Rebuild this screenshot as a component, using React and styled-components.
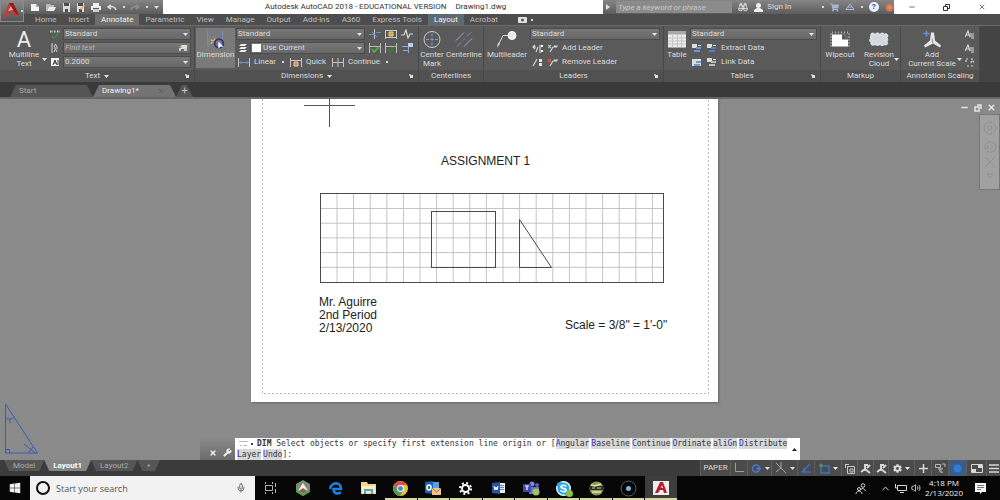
import React, { useState } from 'react';
import styled, { createGlobalStyle, css } from 'styled-components';
import { FaSkype, FaWindows, FaCog, FaShoppingCart } from 'react-icons/fa';
import { Mic, Minus, X, Wrench, Binoculars, ChevronUp, Volume2 } from 'lucide-react';

const GlobalStyle = createGlobalStyle`
	* { box-sizing: border-box; }
	body { margin: 0; background: #3b3b3b; }
	button, input, select { font: inherit; color: inherit; margin: 0; }
	svg { display: block; flex: none; }
`;

/* ---------- icons ---------- */

const Icon = ({ w = 12, h = 12, children, ...rest }) => (
	<svg
		width={w}
		height={h}
		viewBox={`0 0 ${w} ${h}`}
		fill="none"
		stroke="#d6d6d6"
		aria-hidden="true"
		{...rest}
	>
		{children}
	</svg>
);

const Arrow = () => (
	<Icon w={5} h={3} stroke="none">
		<path d="M0 0h5L2.500 3z" fill="#e4e4e4" />
	</Icon>
);

const Launcher = () => (
	<Icon w={5} h={5} stroke="none">
		<path d="M1 1h3v3H1z" fill="#dedede" />
		<path d="M0 0h2v1H1v1H0z" fill="#aaa" />
	</Icon>
);

const NewFile = () => (
	<Icon w={10} h={9} stroke="none">
		<path d="M1 1h5l3 3v4H1z" fill="#f4f4f4" />
		<path d="M6 1l3 3H6z" fill="#aaa" />
	</Icon>
);

const OpenFile = () => (
	<Icon w={10} h={9} stroke="none">
		<path d="M0 1h4l1 1h3v2H3L1 8H0z" fill="#bcbcbc" />
		<path d="M3 4h7L8 8H1z" fill="#eee" />
	</Icon>
);

const Save = ({ pen }) => (
	<Icon w={9} h={9} stroke="none">
		<path d="M1 0h7v9H1z" fill="#d9d9d9" />
		<path d="M2 0h5v3H2zM3 6h3v3H3z" fill="#4b4b4b" />
		{pen && <path d="M4 6l4-4 1 1-4 4z" fill="#e6b35a" />}
	</Icon>
);

const Print = () => (
	<Icon w={10} h={9} stroke="none">
		<path d="M2 0h6v3H2zM0 3h10v4H0z" fill="#eee" />
		<path d="M2 5h6v4H2z" fill="#cfcfcf" />
		<path d="M2 5h6v1H2z" fill="#555" />
	</Icon>
);

const Undo = ({ flip }) => (
	<Icon w={10} h={7} stroke={flip ? '#909090' : '#ddd'} strokeWidth="1.6">
		<path d={flip ? 'M1 6c1-3 4-4 7-3M6 1l3 2-3 2' : 'M9 6C8 3 5 2 2 3M4 1L1 3l3 2'} />
	</Icon>
);

const Spell = () => (
	<Icon w={10} h={10} strokeWidth="1">
		<path d="M0 2.500h3M4 2.500h2M7 2.500h3" stroke="#cfcfcf" strokeWidth="2" strokeDasharray="1 .5" />
		<path d="M2 7l2 2 4-4" stroke="#3f8b3a" strokeWidth="1.400" />
	</Icon>
);

const AlignText = () => (
	<Icon w={8} h={10} strokeWidth="1">
		<path d="M1 0v10M3 4l1.500-3L6 4M3 9l1.500-3L6 9M3 5h4" />
	</Icon>
);

const TextHeight = () => (
	<Icon w={10} h={9} stroke="none">
		<path d="M1 0h8v8H1z" fill="#f2f2f2" />
		<path d="M3 7l2-5 2 5M4 5h2M8 2v5" stroke="#333" />
	</Icon>
);

const FindIcon = () => (
	<Icon w={10} h={8} stroke="none">
		<path d="M3 1h6v4H3z" fill="#ddd" />
		<path d="M1 3l3-2v3z" fill="#d9b462" />
		<path d="M1 7V4h2v3zM6 7V4h3v3z" fill="#cfcfcf" />
	</Icon>
);

const DimensionIcon = () => (
	<Icon w={30} h={22}>
		<path d="M5.500 20V1M22.500 12V1" stroke="#7e93bd" />
		<path d="M6 4.500h16" stroke="#6d7fa4" />
		<path d="M7 20V8h9" stroke="#8f8f8f" strokeDasharray="2 1" />
		<path d="M9 11l2 2M14 10l-2 3M9 16l2-2" stroke="#e8c04d" strokeWidth="1.500" />
		<circle cx="18.500" cy="15.500" r="5" stroke="#30308f" strokeWidth="2" />
		<path d="M18 14v7l2-2 3 0z" fill="#fff" stroke="#fff" strokeWidth=".5" />
	</Icon>
);

const Layers = () => (
	<Icon w={10} h={10} stroke="none">
		<path d="M3 1h6L7 3H1zM3 4h6L7 6H1zM3 7h6L7 9H1z" fill="#ececec" />
	</Icon>
);

const DimLinear = () => (
	<Icon w={12} h={9}>
		<path d="M.5 0v9M11.500 0v9" stroke="#c5c5c5" />
		<path d="M1 4.500h10M3 3v3M9 3v3" stroke="#6c8cc0" />
	</Icon>
);

const DimQuick = () => (
	<Icon w={12} h={9}>
		<path d="M.5 0v9M11.500 0v9M1 2.500h10" stroke="#c5c5c5" />
		<path d="M4 4h4v4H4z" fill="#d78a4c" stroke="#f1c39a" />
	</Icon>
);

const DimContinue = () => (
	<Icon w={12} h={9}>
		<path d="M.5 0v9M6 0v9M11.500 0v9M1 4.500h10" stroke="#c5c5c5" />
	</Icon>
);

const DimBreak = () => (
	<Icon w={12} h={10}>
		<path d="M0 5.500h5M7 3.500h5" stroke="#6c8cc0" />
		<path d="M5.500 0v10" stroke="#b9c4d6" />
		<path d="M3 3l5 5" stroke="#6c8cc0" />
	</Icon>
);

const DimSpace = () => (
	<Icon w={12} h={10}>
		<path d="M.5 1v9M11.500 1v9M1 1.500h10M1 8.500h10" stroke="#c9c9c9" />
		<path d="M4 3h4v4H4z" fill="#dba13d" stroke="#f0cd7c" />
	</Icon>
);

const DimJog = () => (
	<Icon w={12} h={10} strokeWidth="1.200">
		<path d="M0 6h3l2-5 2 8 2-4h3" />
	</Icon>
);

const DimCheck = ({ dark }) => (
	<Icon w={12} h={10}>
		<path d="M.5 0v10M11.500 0v10M1 3.500h10" stroke="#bcbcbc" />
		<path d="M3 6l2 3 5-5" stroke={dark ? '#3d7a35' : '#4fae3f'} strokeWidth="1.800" />
	</Icon>
);

const DimUpdate = () => (
	<Icon w={12} h={10}>
		<path d="M1 3.500h7M2 7.500h5M7.500 4v6" stroke="#8fa7d3" />
		<path d="M7 0h5v4H7z" fill="#bcd0f2" stroke="none" />
	</Icon>
);

const CenterMark = () => (
	<Icon w={20} h={18}>
		<circle cx="10" cy="9" r="8" stroke="#cfcfcf" />
		<path d="M10 3v3M10 7.500v3M10 12v3M4 9h3M8.500 9h3M13 9h3" stroke="#7fa0da" />
	</Icon>
);

const Centerline = () => (
	<Icon w={20} h={18}>
		<path d="M2 10L10 2M10 16l8-8" stroke="#a9a9a9" />
		<path d="M3 16l4-4M9 10l2-2M13 6l4-4" stroke="#6f8fd0" />
	</Icon>
);

const Multileader = () => (
	<Icon w={22} h={18}>
		<path d="M2 15L7 5h6" />
		<path d="M1 17l1-5 2 1.500z" fill="#d6d6d6" stroke="none" />
		<circle cx="16" cy="5" r="4" fill="#e9e9e9" stroke="#fff" />
	</Icon>
);

const LeaderAlign = () => (
	<Icon w={11} h={9} strokeWidth="1.200">
		<path d="M1 3h3M3 1L1 3l2 2M4 8l2-5M8 1v8" />
		<path d="M9 1h2v2H9zM9 6h2v2H9z" fill="#fff" stroke="none" />
	</Icon>
);

const LeaderCollect = () => (
	<Icon w={11} h={9} strokeWidth="1.200">
		<path d="M1 8l4-7" />
		<path d="M7 1h3v3H7zM7 5h3v3H7z" fill="#e5e5e5" stroke="none" />
	</Icon>
);

const LeaderEdit = ({ red }) => (
	<Icon w={10} h={9} strokeWidth="1.200">
		<path d="M2 8l3-5h4M6 2h4" />
		<path d="M0 1l3 3M3 1L0 4" stroke={red ? '#d65a4a' : '#bbb'} />
	</Icon>
);

const TableIcon = () => (
	<Icon w={18} h={18}>
		<path d="M0 1h18v16H0z" fill="#ececec" stroke="none" />
		<path d="M0 1h18v3H0z" fill="#a9a9a9" stroke="none" />
		<path d="M0 7.500h18M0 10.500h18M0 13.500h18M4.500 4v13M9.500 4v13M13.500 4v13" stroke="#c4c4c4" />
	</Icon>
);

const DataIcon = ({ tone = '#6f95d2', sheet }) => (
	<Icon w={10} h={9} stroke="none">
		<path d={sheet ? 'M0 1h9v7H0z' : 'M0 0h5v4H0z'} fill="#dcdcdc" />
		<path d="M4 3h5v2H4zM2 6h6v2H2z" fill={tone} />
		<path d="M6 1h3v1H6z" fill="#eee" />
	</Icon>
);

const WipeoutIcon = () => (
	<Icon w={20} h={16}>
		<path d="M1 15V1h18v14" stroke="#b2b2b2" strokeDasharray="1 2" strokeWidth="2" />
		<path d="M2 3h10v5h6v7H2z" fill="#fff" stroke="none" />
		<path d="M13 2l5 5" stroke="#888" />
	</Icon>
);

const CloudIcon = () => (
	<Icon w={22} h={16}>
		<path
			d="M3 4c-1-3 3-3 4-1 1-2 4-2 5 0 1-2 4-2 4 0 3-2 5 1 3 3 1 2 1 3 0 4 2 3-1 4-3 3-1 2-3 1-4 0-1 1-4 1-5 0-1 1-5 1-4-2-2-2-2-3 0-4-1-1-1-2 0-3z"
			fill="#d5d8de"
			stroke="#f2f2f2"
		/>
	</Icon>
);

const ScaleIcon = () => (
	<Icon w={20} h={18} stroke="none">
		<path d="M9 2h3l1 8 6 5-1 2-7-4-8 4-1-2 6-5z" fill="#e8e8e8" />
		<path d="M10 8l1 5" stroke="#8f8f8f" />
		<path d="M4.500 0v6M1.500 3h6" stroke="#6a8ed8" strokeWidth="1.500" />
	</Icon>
);

const AnnoIcon = ({ sync }) => (
	<Icon w={10} h={9} strokeWidth="1.200">
		{sync ? (
			<path d="M1 4V1h3M6 5l1-4 2 4M4 8H1M6 8h3" strokeDasharray="2 1" />
		) : (
			<path d="M0 7l3-6 2 6M1 5h3M5 4h4M5 6h4M6 8h3" />
		)}
	</Icon>
);

const CameraIcon = () => (
	<Icon w={9} h={6} stroke="none">
		<rect width="9" height="6" rx="1" fill="#e3e3e3" />
		<circle cx="4.500" cy="3" r="1.500" fill="#555" />
	</Icon>
);

const EdgeIcon = () => (
	<Icon w={14} h={13} stroke="#1e7fdc" strokeWidth="2.600">
		<path d="M1 7C2 0 12-1 12 7H4.500c0 5 4 5 7.500 3.500" />
	</Icon>
);

/* ---------- data ---------- */

const ribbonTabs = [
	'Home', 'Insert', 'Annotate', 'Parametric', 'View', 'Manage',
	'Output', 'Add-ins', 'A360', 'Express Tools', 'Layout', 'Acrobat',
];

const dimOptions = ['Angular', 'Baseline', 'Continue', 'Ordinate', 'aliGn', 'Distribute'];

const columns = Array.from({ length: 20 }, (_, i) => 86 + i * 16.6);
const rows = Array.from({ length: 5 }, (_, i) => 109.5 + i * 14.7);

/* "aliGn" is typed with its capital letter, the others with their first one */
const Option = ({ name }) => {
	const key = name.search(/[A-Z]/);
	return (
		<OptionButton>
			{name.slice(0, key)}
			<b>{name[key]}</b>
			{name.slice(key + 1)}
		</OptionButton>
	);
};

const Combo = ({ label, value, swatch }) => (
	<ComboBox>
		{swatch && <Swatch />}
		<select aria-label={label} defaultValue={value}>
			<option>{value}</option>
		</select>
		<Arrow />
	</ComboBox>
);

const Panel = ({ title, menu, launcher, children }) => (
	<PanelBox>
		<PanelBody>{children}</PanelBody>
		<PanelTitle>
			<span>{title}</span>
			{menu && <Arrow />}
			{launcher && (
				<LauncherButton aria-label={`${title} settings`}>
					<Launcher />
				</LauncherButton>
			)}
		</PanelTitle>
	</PanelBox>
);

const TitleBar = () => (
	<TitleRow>
		<QuickAccess>
			<ToolButton aria-label="New"><NewFile /></ToolButton>
			<ToolButton aria-label="Open"><OpenFile /></ToolButton>
			<ToolButton aria-label="Save"><Save /></ToolButton>
			<ToolButton aria-label="Save as"><Save pen /></ToolButton>
			<ToolButton aria-label="Plot"><Print /></ToolButton>
			<ToolButton aria-label="Undo"><Undo /></ToolButton>
			<Dot />
			<ToolButton aria-label="Redo"><Undo flip /></ToolButton>
			<Dot />
			<ToolButton aria-label="Customize"><Arrow /></ToolButton>
		</QuickAccess>
		<Title>
			<span>Autodesk AutoCAD 2018 - EDUCATIONAL VERSION</span>
			<span>Drawing1.dwg</span>
		</Title>
		<InfoCenter>
			<Icon w={4} h={6} stroke="none"><path d="M0 0l4 3-4 3z" fill="#e5e5e5" /></Icon>
			<SearchInput aria-label="Search help" placeholder="Type a keyword or phrase" />
			<ToolButton aria-label="Search"><Binoculars size={10} color="#eee" /></ToolButton>
			<SignIn>
				<Icon w={9} h={9} stroke="none">
					<circle cx="4.500" cy="2.500" r="2.500" fill="#f0f0f0" />
					<path d="M0 9V7l3-2h3l3 2v2z" fill="#f0f0f0" />
				</Icon>
				Sign In
			</SignIn>
			<Dot />
			<ToolButton aria-label="App store"><FaShoppingCart size={9} color="#a7b4cc" /></ToolButton>
			<ToolButton aria-label="Connect">
				<Icon w={10} h={8} stroke="#aab8d8"><path d="M5 1L1 6.500h8zM3 4h4" /></Icon>
			</ToolButton>
			<Dot />
			<ToolButton aria-label="Help">
				<HelpBadge>?</HelpBadge>
			</ToolButton>
			<Icon w={9} h={9} stroke="none">
				<circle cx="4.500" cy="4.500" r="4" fill="#d0764f" />
				<circle cx="4.500" cy="4.500" r="2" fill="#e38b62" />
			</Icon>
		</InfoCenter>
		<WindowButtons>
			<button aria-label="Minimize"><Minus size={8} /></button>
			<button aria-label="Restore">
				<Icon w={7} h={7} stroke="#333"><path d="M.5 2.500h4v4h-4zM2.500 2V.5h4v4H5" /></Icon>
			</button>
			<button aria-label="Close"><X size={8} /></button>
		</WindowButtons>
	</TitleRow>
);

const Ribbon = () => (
	<RibbonRow>
		<Panel title="Text" menu launcher>
			<BigButton $w={46}>
				<BigLetter>A</BigLetter>
				<span>Multiline<br />Text</span>
				<Corner><Arrow /></Corner>
			</BigButton>
			<IconColumn>
				<ToolButton aria-label="Check spelling"><Spell /></ToolButton>
				<ToolButton aria-label="Align text"><AlignText /></ToolButton>
				<ToolButton aria-label="Text height"><TextHeight /></ToolButton>
			</IconColumn>
			<Rows>
				<Combo label="Text style" value="Standard" />
				<ComboBox>
					<input aria-label="Find text" placeholder="Find text" />
					<FindIcon />
				</ComboBox>
				<Combo label="Height" value="0.2000" />
			</Rows>
		</Panel>

		<Panel title="Dimensions" menu launcher>
			<BigButton $w={39} $on>
				<DimensionIcon />
				<span>Dimension</span>
			</BigButton>
			<Rows>
				<Split>
					<Rows>
						<Combo label="Dimension style" value="Standard" />
						<Line>
							<Layers />
							<Combo label="Dimension layer" value="Use Current" swatch />
						</Line>
					</Rows>
					<MiniGrid>
						<ToolButton aria-label="Break"><DimBreak /></ToolButton>
						<ToolButton aria-label="Adjust space"><DimSpace /></ToolButton>
						<ToolButton aria-label="Jog line"><DimJog /></ToolButton>
						<ToolButton aria-label="Inspect"><DimCheck /></ToolButton>
						<ToolButton aria-label="Update"><DimCheck dark /></ToolButton>
						<ToolButton aria-label="Reassociate"><DimUpdate /></ToolButton>
					</MiniGrid>
				</Split>
				<Line $gap={6}>
					<TextButton><DimLinear />Linear</TextButton>
					<Dot />
					<TextButton><DimQuick />Quick</TextButton>
					<TextButton><DimContinue />Continue</TextButton>
					<Dot />
				</Line>
			</Rows>
		</Panel>

		<Panel title="Centerlines">
			<BigButton $w={24}><CenterMark /><span>Center<br />Mark</span></BigButton>
			<BigButton $w={38}><Centerline /><span>Centerline</span></BigButton>
		</Panel>

		<Panel title="Leaders" launcher>
			<BigButton $w={44}><Multileader /><span>Multileader</span></BigButton>
			<Rows>
				<Combo label="Multileader style" value="Standard" />
				<Line $gap={5}>
					<LeaderAlign />
					<TextButton><LeaderEdit />Add Leader</TextButton>
				</Line>
				<Line $gap={5}>
					<LeaderCollect />
					<TextButton><LeaderEdit red />Remove Leader</TextButton>
				</Line>
			</Rows>
		</Panel>

		<Panel title="Tables" launcher>
			<BigButton $w={24}><TableIcon /><span>Table</span></BigButton>
			<Rows>
				<Combo label="Table style" value="Standard" />
				<Line $gap={5}>
					<DataIcon />
					<TextButton><DataIcon tone="#4f7fd0" />Extract Data</TextButton>
				</Line>
				<Line $gap={5}>
					<DataIcon sheet />
					<TextButton><DataIcon tone="#bdbdbd" />Link Data</TextButton>
				</Line>
			</Rows>
		</Panel>

		<Panel title="Markup">
			<BigButton $w={36}><WipeoutIcon /><span>Wipeout</span></BigButton>
			<BigButton $w={40}>
				<CloudIcon />
				<span>Revision<br />Cloud</span>
				<Corner><Arrow /></Corner>
			</BigButton>
		</Panel>

		<Panel title="Annotation Scaling">
			<BigButton $w={60}>
				<ScaleIcon />
				<span>Add<br />Current Scale</span>
				<Corner><Arrow /></Corner>
			</BigButton>
			<IconColumn>
				<ToolButton aria-label="Scale list"><AnnoIcon /></ToolButton>
				<ToolButton aria-label="Add or delete scales"><AnnoIcon /></ToolButton>
				<ToolButton aria-label="Sync scale positions"><AnnoIcon sync /></ToolButton>
			</IconColumn>
		</Panel>
	</RibbonRow>
);

const Sheet = () => (
	<Paper>
		<svg viewBox="0 0 467 303" width="100%" role="img" aria-label="Assignment 1 sheet">
			<path d="M11.500 0v294.500h446V0" fill="none" stroke="#b9b9b9" strokeDasharray="2 2" />
			<path d="M53 6.500h51M78.500 0v28" stroke="#555" />
			<SheetText x="190" y="66">ASSIGNMENT 1</SheetText>
			{columns.map((x) => (
				<path key={x} d={`M${x} 95v88`} stroke="#c4c4c4" />
			))}
			{rows.map((y) => (
				<path key={y} d={`M69 ${y}h343`} stroke="#c4c4c4" />
			))}
			<g fill="none" stroke="#4a4a4a">
				<rect x="69.500" y="94.500" width="343" height="89" />
				<rect x="180.500" y="112.500" width="64" height="56" />
				<path d="M268.500 120.500v48h32z" />
			</g>
			<SheetText x="68" y="207">Mr. Aguirre</SheetText>
			<SheetText x="68" y="220">2nd Period</SheetText>
			<SheetText x="68" y="233">2/13/2020</SheetText>
			<SheetText x="314" y="230">Scale = 3/8" = 1'-0"</SheetText>
		</svg>
	</Paper>
);

const ModelSpace = () => (
	<Canvas>
		<Sheet />
		<UcsIcon>
			<Icon w={36} h={54} stroke="#3c5cb4">
				<path d="M1.500 2v49h32zM1.500 47.500h4V51M2 16c3 2 6 1 8-1M6 17v4M20 42l11 9M24 51l5-6" />
			</Icon>
		</UcsIcon>
		<DocButtons>
			<button aria-label="Minimize drawing"><Minus size={9} strokeWidth={4} /></button>
			<button aria-label="Restore drawing">
				<Icon w={8} h={8} stroke="#e6e6e6" strokeWidth="1.500"><path d="M1 3h4v4H1zM3 1h4v4" /></Icon>
			</button>
			<button aria-label="Close drawing"><X size={9} strokeWidth={4} /></button>
		</DocButtons>
		<NavBar>
			<Icon w={16} h={64} stroke="#8f8f8f">
				<circle cx="8" cy="9" r="6" />
				<circle cx="8" cy="9" r="2" />
				<path d="M3 28c0-7 11-7 11 0s-11 7-11 0M6 26v4M10 26v4M3 38l10 10M13 38L3 48M5 55h6l-3 4z" />
			</Icon>
		</NavBar>
		<CommandLine>
			<CommandTools>
				<button aria-label="Close command line"><X size={8} strokeWidth={4} /></button>
				<button aria-label="Customize command line"><Wrench size={9} fill="#eee" /></button>
			</CommandTools>
			<Prompt>
				<div>
					<PromptRow>
						<Icon w={9} h={7} stroke="#bbb"><path d="M0 1.500h9M1 5.500h2M4 5.500h4" /></Icon>
						<PromptDot />
						<p><strong>DIM</strong> Select objects or specify first extension line origin or [</p>
						<Options>
							{dimOptions.map((name) => (
								<Option key={name} name={name} />
							))}
						</Options>
					</PromptRow>
					<Options>
						<Option name="Layer" />
						<p><Option name="Undo" />]:</p>
					</Options>
				</div>
				<Icon w={5} h={3} stroke="none"><path d="M0 3h5L2.500 0z" fill="#222" /></Icon>
			</Prompt>
		</CommandLine>
	</Canvas>
);

const StatusBar = () => (
	<StatusRow>
		<LayoutTabs>
			<LayoutTab>Model</LayoutTab>
			<LayoutTab $on>Layout1</LayoutTab>
			<LayoutTab>Layout2</LayoutTab>
			<LayoutTab aria-label="New layout">+</LayoutTab>
		</LayoutTabs>
		<StatusTools>
			<StatusButton $w={30}>PAPER</StatusButton>
			<StatusButton aria-label="Ortho" $w={17}>
				<Icon w={10} h={10} stroke="#9c9c9c"><path d="M1.500 0v8.500H10" /></Icon>
			</StatusButton>
			<StatusButton aria-label="Polar" $w={24}>
				<Icon w={12} h={11} stroke="#4a78d0" strokeWidth="1.600">
					<circle cx="6" cy="5.500" r="3.500" /><path d="M6 5.500h5" />
				</Icon>
				<Arrow />
			</StatusButton>
			<StatusButton aria-label="Isodraft" $w={26}>
				<Icon w={12} h={12} stroke="#a6a6a6"><path d="M1 1l10 10M6 0v6L1 10" /></Icon>
				<Arrow />
			</StatusButton>
			<StatusButton aria-label="Object snap tracking" $w={17}>
				<Icon w={11} h={10} stroke="#3e70c4" strokeWidth="1.500"><path d="M1 9L9 1M1 9h9M4 9c0-2-1-3-2-3" /></Icon>
			</StatusButton>
			<StatusButton aria-label="Object snap" $w={27}>
				<Icon w={12} h={11} stroke="#3e70c4" strokeWidth="1.500">
					<path d="M3 3h8v7H3z" /><path d="M1 2.500h4M3 .5v4" stroke="#4b9950" />
				</Icon>
				<Arrow />
			</StatusButton>
			<StatusButton aria-label="Lock viewport" $w={16}>
				<Icon w={11} h={11} stroke="#c6c6c6"><path d="M1 1.500h4M1.500 1v4M3.500 3.500h7v7h-7zM6 6h3v3H6z" /></Icon>
			</StatusButton>
			<StatusButton aria-label="Annotation visibility" $w={16}>
				<Icon w={11} h={11} strokeWidth="2"><path d="M4 2h4M5 3v3L1 9M5 6l5 4M7 5l3-3" /></Icon>
			</StatusButton>
			<StatusButton aria-label="Autoscale" $w={15}>
				<Icon w={11} h={11} strokeWidth="2"><path d="M4 2h4M5 3v3L1 9M5 6l5 4M7 5l3-3" /></Icon>
			</StatusButton>
			<StatusButton aria-label="Workspace" $w={26}>
				<FaCog size={9} /><Arrow />
			</StatusButton>
			<StatusButton aria-label="Annotation monitor" $w={17}>
				<Icon w={11} h={11} strokeWidth="1.500"><path d="M5.500 1v9M1 5.500h9" /></Icon>
			</StatusButton>
			<StatusButton aria-label="Quick properties" $w={17}>
				<Icon w={11} h={11} stroke="#bababa"><path d="M.5 1.500h5v3h-5zM7 1h3v3M3 6h3v3M8 6a2 2 0 100 3" /></Icon>
			</StatusButton>
			<StatusButton aria-label="Hardware acceleration" $w={18} $blue>
				<Icon w={11} h={11}><circle cx="5.500" cy="5.500" r="4.500" fill="#2f7bd6" stroke="#1d63b8" /></Icon>
			</StatusButton>
			<StatusButton aria-label="Clean screen" $w={20}>
				<Icon w={12} h={9}>
					<path d="M.5.5h11v8H.5z" />
					<path d="M7 1h4v3H7zM1 5h4v3H1z" fill="#ddd" stroke="none" />
				</Icon>
			</StatusButton>
			<StatusButton aria-label="Customization" $w={14}>
				<Icon w={10} h={9} strokeWidth="1.500"><path d="M0 1h10M0 4.500h10M0 8h10" /></Icon>
			</StatusButton>
		</StatusTools>
	</StatusRow>
);

const SkypeIcon = () => (
	<AppBadge>
		<FaSkype size={15} color="#28a8ea" />
		<i />
	</AppBadge>
);

const apps = [
	{ name: 'Task view', icon: <Icon w={12} h={12} stroke="#b5b5b5"><path d="M.5 0v2M7.500 0v2M.5 10v2M7.500 10v2M.5 3.500h7v5h-7zM10.500 1v4M10.500 7v4" /></Icon> },
	{
		name: 'Mesh',
		icon: (
			<Icon w={16} h={16} stroke="none">
				<path d="M8 0l7 4v8l-7 4-7-4V4z" fill="#7d8b7a" />
				<path d="M1 9l7 6 7-6v3l-7 4-7-4z" fill="#39a746" />
				<path d="M8 3l5 8-5-3-5 3z" fill="#f2f2ee" />
				<path d="M8 9l3 2-3 2-3-2z" fill="#c8402f" />
			</Icon>
		),
	},
	{ name: 'Edge', icon: <EdgeIcon /> },
	{
		name: 'File explorer',
		icon: (
			<Icon w={15} h={12} stroke="none">
				<path d="M0 0h6l1 2h8v10H0z" fill="#f0d884" />
				<path d="M1 4h13v7H1z" fill="#fbf0bd" />
				<path d="M3 7h9v5h-2V9H5v3H3z" fill="#4fa3cf" />
			</Icon>
		),
	},
	{
		name: 'Chrome',
		open: true,
		icon: (
			<Icon w={15} h={15} stroke="none">
				<circle cx="7.500" cy="7.500" r="7.500" fill="#e9c33c" />
				<path d="M1 4a7.500 7.500 0 0113 0H7.500L5 9z" fill="#d9503f" />
				<path d="M1 4a7.500 7.500 0 006 11l3-5-5-1z" fill="#4a9d56" />
				<circle cx="7.500" cy="7.500" r="3.500" fill="#fff" />
				<circle cx="7.500" cy="7.500" r="2.500" fill="#4f86dc" />
			</Icon>
		),
	},
	{
		name: 'Outlook',
		open: true,
		icon: (
			<Icon w={16} h={14} stroke="none">
				<path d="M6 1h8v9H6z" fill="#58a0e0" />
				<path d="M0 1l8-1v13l-8-1z" fill="#1565b5" />
				<ellipse cx="4" cy="6.500" rx="2" ry="2.500" stroke="#fff" strokeWidth="1.500" />
				<path d="M7 7h9v7H7z" fill="#f0c48f" />
				<path d="M7 7l4.500 4L16 7" stroke="#a8743c" />
			</Icon>
		),
	},
	{ name: 'Settings', open: true, icon: <Icon w={13} h={13} stroke="#fff" strokeWidth="2"><circle cx="6.500" cy="6.500" r="3.500" /><circle cx="6.500" cy="6.500" r="5.500" strokeDasharray="2 2.320" /></Icon> },
	{
		name: 'Word',
		open: true,
		icon: (
			<Icon w={14} h={12} stroke="none">
				<path d="M7 1h6v10H7z" fill="#e8eef8" />
				<path d="M8 3.500h4M8 5.500h4M8 7.500h4" stroke="#5b83c4" />
				<path d="M0 1l8-1v12l-8-1z" fill="#2a569f" />
				<path d="M2 4l1 4 1-3 1 3 1-4" stroke="#fff" />
			</Icon>
		),
	},
	{
		name: 'Teams',
		open: true,
		icon: (
			<Icon w={17} h={15} stroke="none">
				<circle cx="9" cy="3" r="2.500" fill="#7d85dc" />
				<circle cx="14" cy="4" r="2" fill="#5961bb" />
				<path d="M6 6h10v5l-3 2H6z" fill="#6a72cf" />
				<path d="M0 3h8v8H0z" fill="#4149a8" />
				<path d="M2 5h4M4 5v4" stroke="#fff" strokeWidth="1.200" />
				<circle cx="13" cy="11" r="3.500" fill="#9dc65c" />
			</Icon>
		),
	},
	{ name: 'Skype', open: true, icon: <SkypeIcon /> },
	{
		name: 'Game',
		open: true,
		icon: (
			<Icon w={15} h={15} stroke="none">
				<circle cx="7.500" cy="7.500" r="7" fill="#8d9a58" />
				<path d="M1 5h13v4H1z" fill="#2c321f" />
				<path d="M2 4l4 1 6-2M3 11h9" stroke="#dfe3b2" strokeWidth="1.500" />
				<path d="M3 7h3M8 7h4" stroke="#c9cf8e" />
			</Icon>
		),
	},
	{
		name: 'Recorder',
		open: true,
		icon: (
			<Icon w={17} h={17}>
				<circle cx="8.500" cy="8.500" r="7.500" stroke="#52616c" />
				<circle cx="8.500" cy="8.500" r="2.500" fill="#7db4e6" stroke="none" />
			</Icon>
		),
	},
	{
		name: 'AutoCAD',
		open: true,
		active: true,
		icon: (
			<Icon w={16} h={14} stroke="none">
				<path d="M0 0h16v14H0z" fill="#f1ecec" />
				<path d="M2 12L7 1h3l4 11h-3l-1-3H7l-2 3z" fill="#b7202a" />
				<path d="M8 7l1-3 1 3z" fill="#f1ecec" />
			</Icon>
		),
	},
];

const Taskbar = () => (
	<TaskRow>
		<StartButton aria-label="Start"><FaWindows size={12} /></StartButton>
		<TaskSearch>
			<Ring />
			<input aria-label="Start your search" placeholder="Start your search" />
			<Mic size={10} color="#555" />
		</TaskSearch>
		<Apps>
			{apps.map(({ name, icon, open, active }) => (
				<AppButton key={name} aria-label={name} $open={open} $active={active}>
					{icon}
				</AppButton>
			))}
		</Apps>
		<Tray>
			<ToolButton aria-label="People">
				<Icon w={11} h={11}>
					<circle cx="8" cy="2.500" r="1.800" /><path d="M5.500 7c1-2 4-2 5 1M4 4.500a1.500 1.500 0 100 3 1.500 1.500 0 000-3M1 11c0-4 6-4 6 0" />
				</Icon>
			</ToolButton>
			<ToolButton aria-label="Show hidden icons"><ChevronUp size={11} /></ToolButton>
			<ToolButton aria-label="Network">
				<Icon w={12} h={9}><path d="M2.500 1.500h9v5h-9zM5 8.500h4M.5 0v4h2" /></Icon>
			</ToolButton>
			<ToolButton aria-label="Volume"><Volume2 size={10} /></ToolButton>
			<TrayClock>4:18 PM<br />2/13/2020</TrayClock>
			<ToolButton aria-label="Notifications">
				<Icon w={12} h={11} stroke="none">
					<path d="M0 0h11v9H7L5 11V9H0z" fill="#f5f5f5" />
					<path d="M2 2.500h7M2 4.500h7M2 6.500h4" stroke="#777" />
				</Icon>
			</ToolButton>
		</Tray>
	</TaskRow>
);

const App = () => {
	const [tab, setTab] = useState('Annotate');
	return (
		<Window>
			<GlobalStyle />
			<Header>
				<AppMenu aria-label="Application menu">
					<Icon w={18} h={18} stroke="none">
						<path d="M1 16L7 1h4l6 12-4 1-2-3-6 1-1 4z" fill="#c23b35" />
						<path d="M6 9l3-5 2 4z" fill="#e9aaa4" />
						<path d="M7 1h4l6 12-3-1z" fill="#8d1e1c" />
					</Icon>
					<Dot />
				</AppMenu>
				<HeaderRows>
					<TitleBar />
					<TabRow>
						{ribbonTabs.map((name) => (
							<RibbonTab
								key={name}
								$on={tab === name}
								$context={name === 'Layout'}
								onClick={() => setTab(name)}
							>
								{name}
							</RibbonTab>
						))}
						<RibbonMode aria-label="Ribbon display">
							<CameraIcon />
							<Dot />
						</RibbonMode>
					</TabRow>
				</HeaderRows>
			</Header>
			<Ribbon />
			<FileTabs>
				<FileTab>Start</FileTab>
				<FileTab $on>Drawing1*<X size={6} color="#4a4a4a" /></FileTab>
				<NewTab aria-label="New drawing">+</NewTab>
			</FileTabs>
			<ModelSpace />
			<StatusBar />
			<Taskbar />
		</Window>
	);
};

/* ---------- shared ---------- */

const bare = css`
	display: flex;
	align-items: center;
	justify-content: center;
	padding: 0;
	border: 0;
	background: none;
`;

const Window = styled.div`
	display: flex;
	flex-direction: column;
	min-height: 100vh;
	overflow: hidden;
	font: 8px/10px Roboto, 'Noto Sans', sans-serif;
	color: #dcdcdc;
	background: #3b3b3b;
`;

const ToolButton = styled.button`
	${bare}
`;

const TextButton = styled.button`
	${bare}
	gap: 4px;
	white-space: nowrap;
`;

const Dot = styled.i`
	width: 2px;
	height: 2px;
	background: #d8d8d8;
`;

/* ---------- header ---------- */

const Header = styled.header`
	display: flex;
	background: #4d4d4d;
`;

const AppMenu = styled.button`
	${bare}
	align-self: flex-start;
	gap: 1px;
	width: 24px;
	height: 22px;
	border: 1px solid #8a8a8a;
	border-top: 0;
	background: linear-gradient(#8c8c8c, #555);
`;

const HeaderRows = styled.div`
	flex: 1;
	min-width: 0;
`;

const TitleRow = styled.div`
	display: grid;
	grid-template-columns: 139fr 440fr 291fr 106fr;
	height: 14px;
`;

const QuickAccess = styled.div`
	display: flex;
	align-items: center;
	justify-content: space-between;
	padding: 0 4px 0 6px;
	background: linear-gradient(#858585, #5c5c5c);
`;

const Title = styled.div`
	display: flex;
	gap: 9px;
	padding-left: 102px;
	line-height: 13px;
	white-space: nowrap;
	color: #333;
	background: #fff;
`;

const InfoCenter = styled.div`
	display: flex;
	align-items: center;
	justify-content: space-between;
	padding-left: 3px;
	background: linear-gradient(#858585, #5c5c5c);
`;

const SearchInput = styled.input`
	width: 116px;
	height: 12px;
	padding: 0 2px;
	border: 0;
	font-style: italic;
	background: #8b8b8b;

	&::placeholder {
		color: #c9c9c9;
	}
`;

const SignIn = styled.button`
	${bare}
	gap: 4px;
	margin-right: 24px;
`;

const HelpBadge = styled.span`
	width: 10px;
	height: 10px;
	border-radius: 5px;
	font-weight: bold;
	color: #2f59a8;
	background: #eef2fb;
`;

const WindowButtons = styled.div`
	display: flex;
	align-items: center;
	justify-content: space-around;
	background: #fff;

	button {
		${bare}
		color: #333;
	}
`;

const TabRow = styled.nav`
	display: flex;
	height: 11px;
	padding-left: 5px;
	background: #4d4d4d;
`;

const RibbonTab = styled.button`
	${bare}
	padding: 0 6px;
	white-space: nowrap;
	color: ${({ $on, $context }) => ($on || $context ? '#f2f2f2' : '#bebebe')};
	background: ${({ $on, $context }) => ($on ? '#6e6e6e' : $context ? '#5d6973' : 'none')};
`;

const RibbonMode = styled.button`
	${bare}
	gap: 4px;
	margin-left: 14px;
`;

/* ---------- ribbon ---------- */

const RibbonRow = styled.section`
	display: grid;
	grid-template-columns: 195fr 224fr 65fr 180fr 157fr 80fr 79fr 20fr;
	border-top: 1px solid #6a6a6a;
	background: #444;
`;

const PanelBox = styled.div`
	display: flex;
	flex-direction: column;
	min-width: 0;
	border-right: 1px solid #484848;
	background: #5a5a5a;
`;

const PanelBody = styled.div`
	display: flex;
	flex: 1;
	gap: 1px;
	height: 46px;
	padding: 2px 3px 2px 1px;
`;

const PanelTitle = styled.div`
	position: relative;
	display: flex;
	align-items: center;
	justify-content: center;
	gap: 4px;
	height: 12px;
	white-space: nowrap;
	background: #515151;
`;

const LauncherButton = styled.button`
	${bare}
	position: absolute;
	right: 4px;
`;

const BigButton = styled.button`
	${bare}
	position: relative;
	flex: none;
	flex-direction: column;
	justify-content: flex-start;
	gap: 1px;
	width: ${({ $w }) => $w}px;
	padding-top: 2px;
	white-space: nowrap;
	line-height: 9px;
	background: ${({ $on }) => ($on ? '#7a7a7a' : 'none')};

	> svg {
		height: 19px;
	}
`;

const BigLetter = styled.span`
	font-size: 22px;
	line-height: 19px;
	color: #ececec;
`;

const Corner = styled.span`
	position: absolute;
	right: 0;
	bottom: 7px;
`;

const IconColumn = styled.div`
	display: grid;
	grid-template-rows: repeat(3, 12px);
	gap: 2px;
	width: 14px;
`;

const Rows = styled.div`
	display: flex;
	flex: 1;
	flex-direction: column;
	gap: 2px;
	min-width: 0;
`;

const Line = styled.div`
	display: flex;
	align-items: center;
	gap: ${({ $gap = 2 }) => $gap}px;
	height: 12px;
	padding-left: 2px;
`;

const Split = styled.div`
	display: flex;
	gap: 2px;
`;

const MiniGrid = styled.div`
	display: grid;
	grid-template-columns: repeat(3, 16px);
	grid-template-rows: repeat(2, 12px);
	gap: 2px 0;
`;

const ComboBox = styled.div`
	display: flex;
	flex: 1 0 auto;
	align-items: center;
	height: 12px;
	padding-right: 2px;
	border: 1px solid #4b4b4b;
	background: linear-gradient(#777, #686868);

	select,
	input {
		flex: 1;
		min-width: 0;
		height: 10px;
		padding: 0 1px;
		border: 0;
		appearance: none;
		background: none;
	}

	input::placeholder {
		font-style: italic;
		color: #b4b4b4;
	}
`;

const Swatch = styled.i`
	width: 9px;
	height: 8px;
	margin: 0 1px;
	background: #fff;
`;

/* ---------- file tabs ---------- */

const FileTabs = styled.nav`
	display: flex;
	align-items: flex-end;
	height: 17px;
	padding-left: 10px;
	border-bottom: 2px solid #666;
	background: #3a3a3a;
`;

const FileTab = styled.button`
	${bare}
	justify-content: space-between;
	width: 83px;
	height: 12px;
	padding: 0 12px 0 9px;
	color: ${({ $on }) => ($on ? '#f0f0f0' : '#a8a8a8')};
	background: ${({ $on }) => ($on ? '#737373' : '#555')};
	clip-path: polygon(6px 0, calc(100% - 6px) 0, 100% 100%, 0 100%);
`;

const NewTab = styled(FileTab)`
	justify-content: center;
	width: 17px;
	padding: 0;
	font-size: 11px;
	color: #c6c6c6;
`;

/* ---------- drawing area ---------- */

const Canvas = styled.main`
	position: relative;
	display: grid;
	flex: 1;
	grid-template-columns: 251fr 467fr 282fr;
	align-items: start;
	background: #8a8a8a;
`;

const Paper = styled.div`
	grid-column: 2;
	background: #fff;
	box-shadow: 1px 1px 2px #666;
`;

const SheetText = styled.text`
	font: 12px 'Liberation Sans', Arial, sans-serif;
	fill: #222;
`;

const UcsIcon = styled.div`
	position: absolute;
	left: 4px;
	bottom: 4px;
`;

const DocButtons = styled.div`
	position: absolute;
	top: 4px;
	right: 4px;
	display: flex;
	gap: 5px;

	button {
		${bare}
		color: #e6e6e6;
	}
`;

const NavBar = styled.div`
	position: absolute;
	top: 15px;
	right: 0;
	width: 21px;
	height: 76px;
	padding: 4px 2px;
	border: 1px solid #787878;
	background: #a1a1a1;
`;

const CommandLine = styled.div`
	position: absolute;
	right: 20%;
	bottom: 0;
	left: 20%;
	display: flex;
	height: 22px;
`;

const CommandTools = styled.div`
	display: flex;
	align-items: flex-end;
	gap: 6px;
	padding: 0 3px 3px 9px;
	background: linear-gradient(#8a8a8a, #6c6c6c);

	button {
		${bare}
		color: #f0f0f0;
	}
`;

const Prompt = styled.div`
	display: flex;
	flex: 1;
	align-items: center;
	justify-content: space-between;
	padding: 0 3px 0 2px;
	font: 8px/11px 'DejaVu Sans Mono', monospace;
	white-space: nowrap;
	color: #333;
	background: #fff;

	p {
		margin: 0;
	}
`;

const PromptRow = styled.div`
	display: flex;
	align-items: center;
	padding-left: 2px;
`;

const PromptDot = styled(Dot)`
	margin: 0 4px 0 3px;
	background: #444;
`;

const Options = styled.div`
	display: flex;
	gap: 2px;
`;

const OptionButton = styled.button`
	padding: 0;
	border: 0;
	background: #d8d8d8;

	b {
		font-weight: normal;
		color: #3232c0;
	}
`;

/* ---------- status bar ---------- */

const StatusRow = styled.footer`
	display: flex;
	justify-content: space-between;
	height: 16px;
	background: #3b3b3b;
`;

const LayoutTabs = styled.nav`
	display: flex;
	padding-left: 4px;
`;

const LayoutTab = styled.button`
	${bare}
	height: 11px;
	padding: 0 9px;
	font-weight: ${({ $on }) => ($on ? 'bold' : 'normal')};
	color: ${({ $on }) => ($on ? '#fff' : '#ababab')};
	background: ${({ $on }) => ($on ? '#858585' : '#555')};
	clip-path: polygon(0 0, 100% 0, calc(100% - 5px) 100%, 5px 100%);
`;

const StatusTools = styled.div`
	display: flex;
	background: #4b4b4b;
`;

const StatusButton = styled.button`
	${bare}
	gap: 3px;
	width: ${({ $w }) => $w}px;
	border-left: 1px solid #5e5e5e;
	background: ${({ $blue }) => ($blue ? '#3d5c80' : 'none')};
`;

/* ---------- taskbar ---------- */

const TaskRow = styled.footer`
	display: flex;
	height: 24px;
	color: #f0f0f0;
	background: #060606;
`;

const StartButton = styled.button`
	${bare}
	width: 30px;
`;

const TaskSearch = styled.div`
	display: flex;
	flex: 0 1 225px;
	align-items: center;
	gap: 6px;
	padding: 0 9px 0 6px;
	background: #f2f2f2;

	input {
		flex: 1;
		min-width: 0;
		padding: 0;
		border: 0;
		font: 9px 'Open Sans', 'Noto Sans', sans-serif;
		background: none;
	}

	input::placeholder {
		color: #555;
	}
`;

const Ring = styled.i`
	width: 14px;
	height: 14px;
	border: 2px solid #111;
	border-radius: 7px;
`;

const Apps = styled.div`
	display: grid;
	flex: 0 1 422px;
	grid-template-columns: repeat(13, 1fr);
	column-gap: 1px;
`;

const AppButton = styled.button`
	${bare}
	border-top: 2px solid transparent;
	border-bottom: 2px solid ${({ $open }) => ($open ? '#d3dc9c' : 'transparent')};
	background: ${({ $active }) => ($active ? '#3d3d3d' : 'none')};
`;

const AppBadge = styled.span`
	position: relative;
	border-radius: 8px;
	background: #f4fbff;

	i {
		position: absolute;
		right: -2px;
		bottom: -1px;
		width: 7px;
		height: 7px;
		border-radius: 4px;
		background: #8cc152;
	}
`;

const Tray = styled.div`
	display: flex;
	align-items: center;
	gap: 4px;
	margin-left: auto;
	padding-right: 13px;

	button:first-child {
		margin-right: 10px;
	}
`;

const TrayClock = styled.time`
	margin-right: 8px;
	text-align: center;
	font-family: 'Open Sans', 'Noto Sans', sans-serif;
`;

export default App;
